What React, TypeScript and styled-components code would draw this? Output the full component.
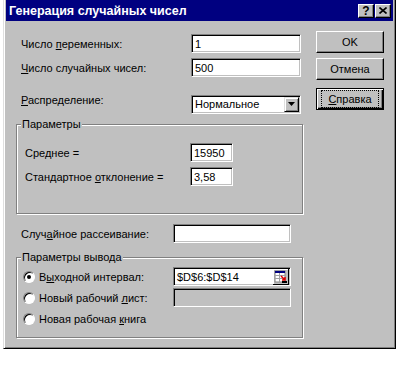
import React from 'react';
import styled, { createGlobalStyle } from 'styled-components';

const GlobalStyle = createGlobalStyle`
  html, body {
    margin: 0;
    padding: 0;
    background: #ffffff;
  }
  body {
    font-family: 'Liberation Sans', Arial, sans-serif;
    font-size: 11px;
    color: #000;
  }
`;

const Page = styled.div`
  width: 397px;
  height: 367px;
  padding-left: 3px;
  box-sizing: border-box;
  background: #fff;
`;

const Dialog = styled.div`
  width: 393px;
  height: 349px;
  box-sizing: border-box;
  background: #c0c0c0;
  border-left: 1px solid #dfdfdf;
  border-right: 1px solid #000;
  border-bottom: 1px solid #000;
  box-shadow: inset 1px 0 #fff, inset -1px -1px #808080;
  padding: 0 2px 0 2px;
  display: flex;
  flex-direction: column;
`;

const TitleBar = styled.div`
  height: 21px;
  background: #000080;
  display: flex;
  align-items: center;
  padding: 0 2px 0 3px;
  color: #fff;
  font-weight: bold;
  font-size: 12.5px;
`;

const TitleText = styled.span`
  flex: 1;
`;

const TitleButton = styled.div<{ $gap?: number }>`
  width: 16px;
  height: 14px;
  margin-left: ${(p) => p.$gap ?? 0}px;
  box-sizing: border-box;
  background: #c0c0c0;
  border: 1px solid;
  border-color: #fff #000 #000 #fff;
  box-shadow: inset -1px -1px #808080;
  color: #000;
  display: flex;
  align-items: center;
  justify-content: center;
  font-size: 12px;
  font-weight: bold;
`;

const Body = styled.div`
  flex: 1;
  display: flex;
  padding-left: 10px;
`;

const LeftCol = styled.div`
  width: 287px;
  padding-top: 13px;
  display: flex;
  flex-direction: column;
`;

const RightCol = styled.div`
  margin-left: 13px;
  padding-top: 10px;
  display: flex;
  flex-direction: column;
`;

const Row = styled.div<{ $top?: number; $label: number; $pad?: number }>`
  display: grid;
  grid-template-columns: ${(p) => p.$label}px auto;
  align-items: center;
  margin-top: ${(p) => p.$top ?? 0}px;
  padding-left: ${(p) => p.$pad ?? 5}px;
`;

const Label = styled.span<{ $raise?: number }>`
  white-space: nowrap;
  margin-bottom: ${(p) => (p.$raise ?? 0) * 2}px;
`;

const Field = styled.div<{ $w: number; $disabled?: boolean }>`
  width: ${(p) => p.$w}px;
  height: 19px;
  box-sizing: border-box;
  background: ${(p) => (p.$disabled ? '#c0c0c0' : '#fff')};
  border: 1px solid;
  border-color: #808080 #fff #fff #808080;
  box-shadow: inset 1px 1px #000, inset -1px -1px #c0c0c0;
  display: flex;
  align-items: center;
  padding: 0 1px 0 3px;
`;

const FieldText = styled.span`
  flex: 1;
  white-space: nowrap;
`;

const DropButton = styled.div`
  width: 15px;
  height: 15px;
  box-sizing: border-box;
  background: #c0c0c0;
  border: 1px solid;
  border-color: #dfdfdf #000 #000 #dfdfdf;
  box-shadow: inset 1px 1px #fff, inset -1px -1px #808080;
  display: flex;
  align-items: center;
  justify-content: center;
`;

const Group = styled.div<{ $top: number; $height: number }>`
  position: relative;
  margin-top: ${(p) => p.$top}px;
  height: ${(p) => p.$height}px;
  box-sizing: border-box;
  border: 1px solid #808080;
  box-shadow: inset 1px 1px #fff, 1px 1px #fff;
  display: flex;
  flex-direction: column;
`;

const Legend = styled.span`
  position: absolute;
  top: -8px;
  left: 4px;
  padding: 0 1px;
  background: #c0c0c0;
  line-height: 14px;
`;

const Radio = styled.span<{ $checked?: boolean }>`
  width: 12px;
  height: 12px;
  box-sizing: border-box;
  border-radius: 50%;
  border: 1px solid;
  border-color: #808080 #fff #fff #808080;
  box-shadow: inset 1px 1px #000;
  background: #fff;
  display: inline-flex;
  align-items: center;
  justify-content: center;
  margin-right: 4px;
  &::after {
    content: '';
    display: ${(p) => (p.$checked ? 'block' : 'none')};
    width: 4px;
    height: 4px;
    border-radius: 50%;
    background: #000;
  }
`;

const RadioLabel = styled.span`
  display: flex;
  align-items: center;
  white-space: nowrap;
`;

const Button = styled.div<{ $top?: number; $default?: boolean }>`
  width: 68px;
  height: 22px;
  margin-top: ${(p) => p.$top ?? 0}px;
  box-sizing: border-box;
  background: #c0c0c0;
  border: 1px solid;
  border-color: ${(p) => (p.$default ? '#000' : '#fff #000 #000 #fff')};
  box-shadow: ${(p) =>
    p.$default
      ? 'inset 1px 1px #fff, inset -1px -1px #000, inset -2px -2px #808080'
      : 'inset -1px -1px #808080'};
  display: flex;
  align-items: center;
  justify-content: center;
`;

const Focus = styled.span`
  outline: 1px dotted #000;
  padding: 2px 6px;
`;

const U = styled.span`
  text-decoration: underline;
`;

const RefIcon = () => (
  <svg width="16" height="16" viewBox="0 0 16 16">
    <rect x="0" y="0" width="16" height="16" fill="#c0c0c0" />
    <path d="M0 15.5H16M15.5 0V16" stroke="#000" />
    <path d="M0 0.5H15M0.5 0V15" stroke="#fff" />
    <rect x="2" y="2" width="10" height="11" fill="#fff" stroke="#808080" />
    <rect x="2" y="2" width="10" height="2" fill="#000080" />
    <path d="M2 6.5H12M2 9.5H12M6.5 4V13" stroke="#a0a0a0" />
    <path d="M8 7L12 11M12 8V11H9" stroke="#e00000" strokeWidth="1.5" fill="none" />
    <rect x="9" y="12" width="5" height="2" fill="#000" />
  </svg>
);

const App = () => {
  return (
    <>
      <GlobalStyle />
      <Page>
        <Dialog>
          <TitleBar>
            <TitleText>Генерация случайных чисел</TitleText>
            <TitleButton>?</TitleButton>
            <TitleButton $gap={1}>
              <svg width="8" height="7" viewBox="0 0 8 7">
                <path d="M0.5 0.5L7.5 6.5M7.5 0.5L0.5 6.5" stroke="#000" strokeWidth="1.6" />
              </svg>
            </TitleButton>
          </TitleBar>
          <Body>
            <LeftCol>
              <Row $label={170}>
                <Label>
                  Число <U>п</U>еременных:
                </Label>
                <Field $w={110}>
                  <FieldText>1</FieldText>
                </Field>
              </Row>
              <Row $label={170} $top={5}>
                <Label>
                  <U>Ч</U>исло случайных чисел:
                </Label>
                <Field $w={110}>
                  <FieldText>500</FieldText>
                </Field>
              </Row>
              <Row $label={170} $top={17}>
                <Label $raise={4}>
                  <U>Р</U>аспределение:
                </Label>
                <Field $w={110}>
                  <FieldText>Нормальное</FieldText>
                  <DropButton>
                    <svg width="7" height="4" viewBox="0 0 7 4">
                      <path d="M0 0H7L3.5 4Z" fill="#000" />
                    </svg>
                  </DropButton>
                </Field>
              </Row>

              <Group $top={10} $height={90}>
                <Legend>Параметры</Legend>
                <Row $label={165} $pad={8} $top={18}>
                  <Label>
                    Сре<U>д</U>нее =
                  </Label>
                  <Field $w={43}>
                    <FieldText>15950</FieldText>
                  </Field>
                </Row>
                <Row $label={165} $pad={8} $top={5}>
                  <Label>
                    Стандартное <U>о</U>тклонение =
                  </Label>
                  <Field $w={43}>
                    <FieldText>3,58</FieldText>
                  </Field>
                </Row>
              </Group>

              <Row $label={152} $top={10}>
                <Label>
                  Случ<U>а</U>йное рассеивание:
                </Label>
                <Field $w={118} />
              </Row>

              <Group $top={14} $height={81}>
                <Legend>Параметры вывода</Legend>
                <Row $label={150} $pad={6} $top={9}>
                  <RadioLabel>
                    <Radio $checked />
                    <span>
                      В<U>ы</U>ходной интервал:
                    </span>
                  </RadioLabel>
                  <Field $w={118}>
                    <FieldText>$D$6:$D$14</FieldText>
                    <RefIcon />
                  </Field>
                </Row>
                <Row $label={150} $pad={6} $top={2}>
                  <RadioLabel>
                    <Radio />
                    <span>
                      Новый рабочий <U>л</U>ист:
                    </span>
                  </RadioLabel>
                  <Field $w={118} $disabled />
                </Row>
                <Row $label={150} $pad={6} $top={6}>
                  <RadioLabel>
                    <Radio />
                    <span>
                      Новая рабочая <U>к</U>нига
                    </span>
                  </RadioLabel>
                </Row>
              </Group>
            </LeftCol>
            <RightCol>
              <Button>OK</Button>
              <Button $top={5}>Отмена</Button>
              <Button $top={8} $default>
                <Focus>
                  <U>С</U>правка
                </Focus>
              </Button>
            </RightCol>
          </Body>
        </Dialog>
      </Page>
    </>
  );
};

export default App;
